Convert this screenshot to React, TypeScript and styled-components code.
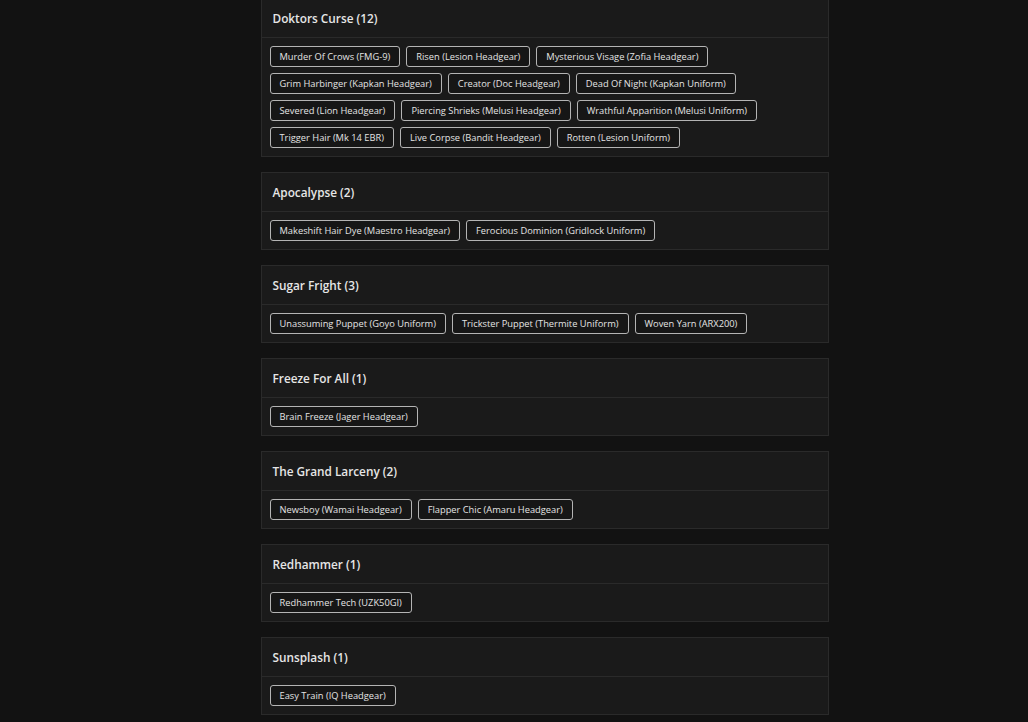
import React from "react";
import styled, { createGlobalStyle } from "styled-components";

const GlobalStyle = createGlobalStyle`
  html, body {
    margin: 0;
    padding: 0;
    background-color: #121212;
    font-family: "Open Sans", "DejaVu Sans", sans-serif;
    color: #e6e6e6;
  }
`;

const Page = styled.div`
  display: flex;
  justify-content: center;
  padding-left: 61px;
`;

const EventList = styled.div`
  display: flex;
  flex-direction: column;
  gap: 15px;
  width: 568px;
  margin-top: -2px;
`;

const Card = styled.section`
  background-color: #1a1a1a;
  border: 1px solid #2a2a2a;
`;

const CardHeader = styled.div`
  height: 38px;
  display: flex;
  align-items: center;
  padding: 0 11px;
  border-bottom: 1px solid #2a2a2a;
  font-size: 11.8px;
  font-weight: 600;
  color: #e6e6e6;
`;

const ChipWrap = styled.div`
  display: flex;
  flex-wrap: wrap;
  gap: 6px;
  padding: 8px;
`;

const Chip = styled.span`
  display: inline-flex;
  align-items: center;
  height: 21px;
  box-sizing: border-box;
  padding: 0 9px;
  border: 1px solid #b4b4b4;
  border-radius: 3px;
  background-color: #161616;
  font-size: 9.3px;
  color: #e4e4e4;
  white-space: nowrap;
`;

type Event = { name: string; items: string[] };

const events: Event[] = [
  {
    name: "Doktors Curse",
    items: [
      "Murder Of Crows (FMG-9)",
      "Risen (Lesion Headgear)",
      "Mysterious Visage (Zofia Headgear)",
      "Grim Harbinger (Kapkan Headgear)",
      "Creator (Doc Headgear)",
      "Dead Of Night (Kapkan Uniform)",
      "Severed (Lion Headgear)",
      "Piercing Shrieks (Melusi Headgear)",
      "Wrathful Apparition (Melusi Uniform)",
      "Trigger Hair (Mk 14 EBR)",
      "Live Corpse (Bandit Headgear)",
      "Rotten (Lesion Uniform)",
    ],
  },
  {
    name: "Apocalypse",
    items: [
      "Makeshift Hair Dye (Maestro Headgear)",
      "Ferocious Dominion (Gridlock Uniform)",
    ],
  },
  {
    name: "Sugar Fright",
    items: [
      "Unassuming Puppet (Goyo Uniform)",
      "Trickster Puppet (Thermite Uniform)",
      "Woven Yarn (ARX200)",
    ],
  },
  { name: "Freeze For All", items: ["Brain Freeze (Jager Headgear)"] },
  {
    name: "The Grand Larceny",
    items: ["Newsboy (Wamai Headgear)", "Flapper Chic (Amaru Headgear)"],
  },
  { name: "Redhammer", items: ["Redhammer Tech (UZK50GI)"] },
  { name: "Sunsplash", items: ["Easy Train (IQ Headgear)"] },
];

export default function App() {
  return (
    <>
      <GlobalStyle />
      <Page>
        <EventList>
          {events.map((ev) => (
            <Card key={ev.name}>
              <CardHeader>
                {ev.name} ({ev.items.length})
              </CardHeader>
              <ChipWrap>
                {ev.items.map((item) => (
                  <Chip key={item}>{item}</Chip>
                ))}
              </ChipWrap>
            </Card>
          ))}
        </EventList>
      </Page>
    </>
  );
}
